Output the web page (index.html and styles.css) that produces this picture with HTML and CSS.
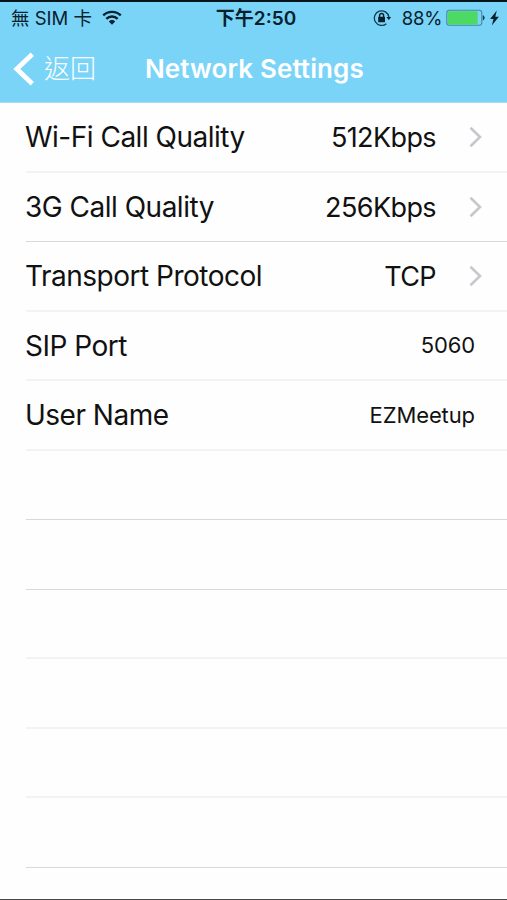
FILE: index.html
```html
<!DOCTYPE html>
<html lang="zh-Hant">
<head>
    <meta charset="UTF-8">
    <meta name="viewport" content="width=device-width, initial-scale=1.0">
    <title>Network Settings</title>
    <link rel="stylesheet" href="styles.css">
</head>
<body>
    <div class="screen">
        <header class="header">
            <div class="status-bar">
                <div class="status-left">
                    <span class="carrier">無 SIM 卡</span>
                    <svg class="wifi" width="20" height="16" viewBox="0 0 20 16">
                        <path d="M1.2 5.4a12.8 12.8 0 0 1 17.6 0M4.3 8.8a8.3 8.3 0 0 1 11.4 0" fill="none" stroke="#08212c" stroke-width="2.4"/>
                        <path d="M6.8 11.5a4.8 4.8 0 0 1 6.4 0L10 14.8z" fill="#08212c"/>
                    </svg>
                </div>
                <span class="time">下午2:50</span>
                <div class="status-right">
                    <svg class="lock" width="19" height="18" viewBox="0 0 19 18">
                        <path d="M13.4 14.7A7.3 7.3 0 1 1 15.9 8" fill="none" stroke="#12394b" stroke-width="1.3"/>
                        <path d="M13.4 8h4.8l-2.4 3z" fill="#08212c"/>
                        <rect x="5.2" y="7.8" width="6.8" height="5.4" rx=".5" fill="#08212c"/>
                        <path d="M6.6 8.4V6.5a2 2 0 0 1 4 0v1.9" fill="none" stroke="#08212c" stroke-width="1.4"/>
                    </svg>
                    <span class="percent">88%</span>
                    <svg class="battery" width="39" height="18" viewBox="0 0 39 18">
                        <rect x=".8" y="1.3" width="35" height="15" rx="2.5" fill="none" stroke="#4686a0" stroke-width="1.1"/>
                        <rect x="1.7" y="2.2" width="30" height="13.2" rx="1.5" fill="#4cd964"/>
                        <path d="M36.8 6.2c2.4.6 2.4 4.6 0 5.2z" fill="#12394b"/>
                    </svg>
                    <svg class="bolt" width="9" height="16" viewBox="0 0 9 16">
                        <path d="M6.8.4L.1 9h3.4L1.8 15.6 8.9 6.7H5.3z" fill="#08212c"/>
                    </svg>
                </div>
            </div>
            <nav class="nav-bar">
                <a class="back">
                    <svg width="22" height="34" viewBox="0 0 22 34">
                        <path d="M19.3 2.3L3.8 17l15.5 14.7" fill="none" stroke="#fff" stroke-width="4.8"/>
                    </svg>
                    <span>返回</span>
                </a>
                <h1>Network Settings</h1>
            </nav>
        </header>

        <ul class="settings">
            <li class="row">
                <span class="label">Wi-Fi Call Quality</span>
                <span class="value">512Kbps</span>
                <svg class="chevron" width="14" height="22" viewBox="0 0 14 22"><path d="M1.5 1.7L11 11l-9.5 9.3"/></svg>
            </li>
            <li class="row dark">
                <span class="label">3G Call Quality</span>
                <span class="value">256Kbps</span>
                <svg class="chevron" width="14" height="22" viewBox="0 0 14 22"><path d="M1.5 1.7L11 11l-9.5 9.3"/></svg>
            </li>
            <li class="row">
                <span class="label">Transport Protocol</span>
                <span class="value">TCP</span>
                <svg class="chevron" width="14" height="22" viewBox="0 0 14 22"><path d="M1.5 1.7L11 11l-9.5 9.3"/></svg>
            </li>
            <li class="row">
                <span class="label">SIP Port</span>
                <span class="value small">5060</span>
            </li>
            <li class="row">
                <span class="label">User Name</span>
                <span class="value small">EZMeetup</span>
            </li>
            <li class="row dark"></li>
            <li class="row dark"></li>
            <li class="row"></li>
            <li class="row"></li>
            <li class="row"></li>
            <li class="row dark"></li>
        </ul>
    </div>
</body>
</html>
```

FILE: styles.css
```css
* {
    box-sizing: border-box;
}
body {
    margin: 0;
    background: #fefefe;
    color: #111;
    font-family: Inter, "Noto Sans CJK TC", sans-serif;
}
.screen {
    height: 900px;
    overflow: hidden;
    border-bottom: 1px solid #4a4a4a;
}
.header {
    height: 103px;
    background: #79d4f8;
    border-top: 2px solid #06141b;
    border-bottom: 1px solid #a9dcf2;
}
.status-bar {
    display: grid;
    grid-template-columns: 1fr auto 1fr;
    align-items: center;
    height: 33px;
    padding: 0 8px 0 11px;
    color: #08212c;
    font-size: 18.5px;
    line-height: 33px;
    white-space: nowrap;
}
.status-left,
.status-right {
    display: flex;
    align-items: center;
}
.status-right {
    justify-content: flex-end;
}
.wifi {
    margin: 0 0 2px 10px;
}
.time {
    margin-left: 2px;
    font-size: 19px;
    font-weight: 600;
}
.percent {
    margin: 0 4px 0 10px;
    letter-spacing: -0.3px;
}
.battery,
.bolt,
.lock {
    margin-bottom: 1px;
}
.bolt {
    margin-left: 5px;
}
.nav-bar {
    display: grid;
    grid-template-columns: 145px 1fr;
    align-items: center;
    height: 67px;
    color: #fff;
}
.back {
    display: flex;
    align-items: center;
    padding-left: 13px;
    font-size: 26px;
    font-weight: 300;
    line-height: 34px;
}
.back span {
    margin-left: 9px;
}
h1 {
    margin: 1px 0 0;
    font-size: 26px;
    font-weight: 600;
    line-height: 34px;
    letter-spacing: 0.1px;
}
.settings {
    margin: 0;
    padding: 0;
    list-style: none;
}
.row {
    display: flex;
    align-items: center;
    height: 69.55px;
    margin-left: 26px;
    padding-right: 24px;
    border-bottom: 2px solid #f3f3f4;
    font-size: 27px;
    white-space: nowrap;
}
.row.dark {
    border-bottom: 1px solid #d9d9db;
}
.label {
    margin: 1px 0 0 -1px;
    font-size: 28px;
    letter-spacing: -0.5px;
}
.value {
    margin: 2px 0 0 auto;
    letter-spacing: -0.6px;
}
.chevron {
    margin-left: 33px;
    fill: none;
    stroke: #c7c7cc;
    stroke-width: 2.6;
}
.small {
    margin: 0 8px 0 auto;
    font-size: 22px;
    letter-spacing: -0.1px;
}
```
